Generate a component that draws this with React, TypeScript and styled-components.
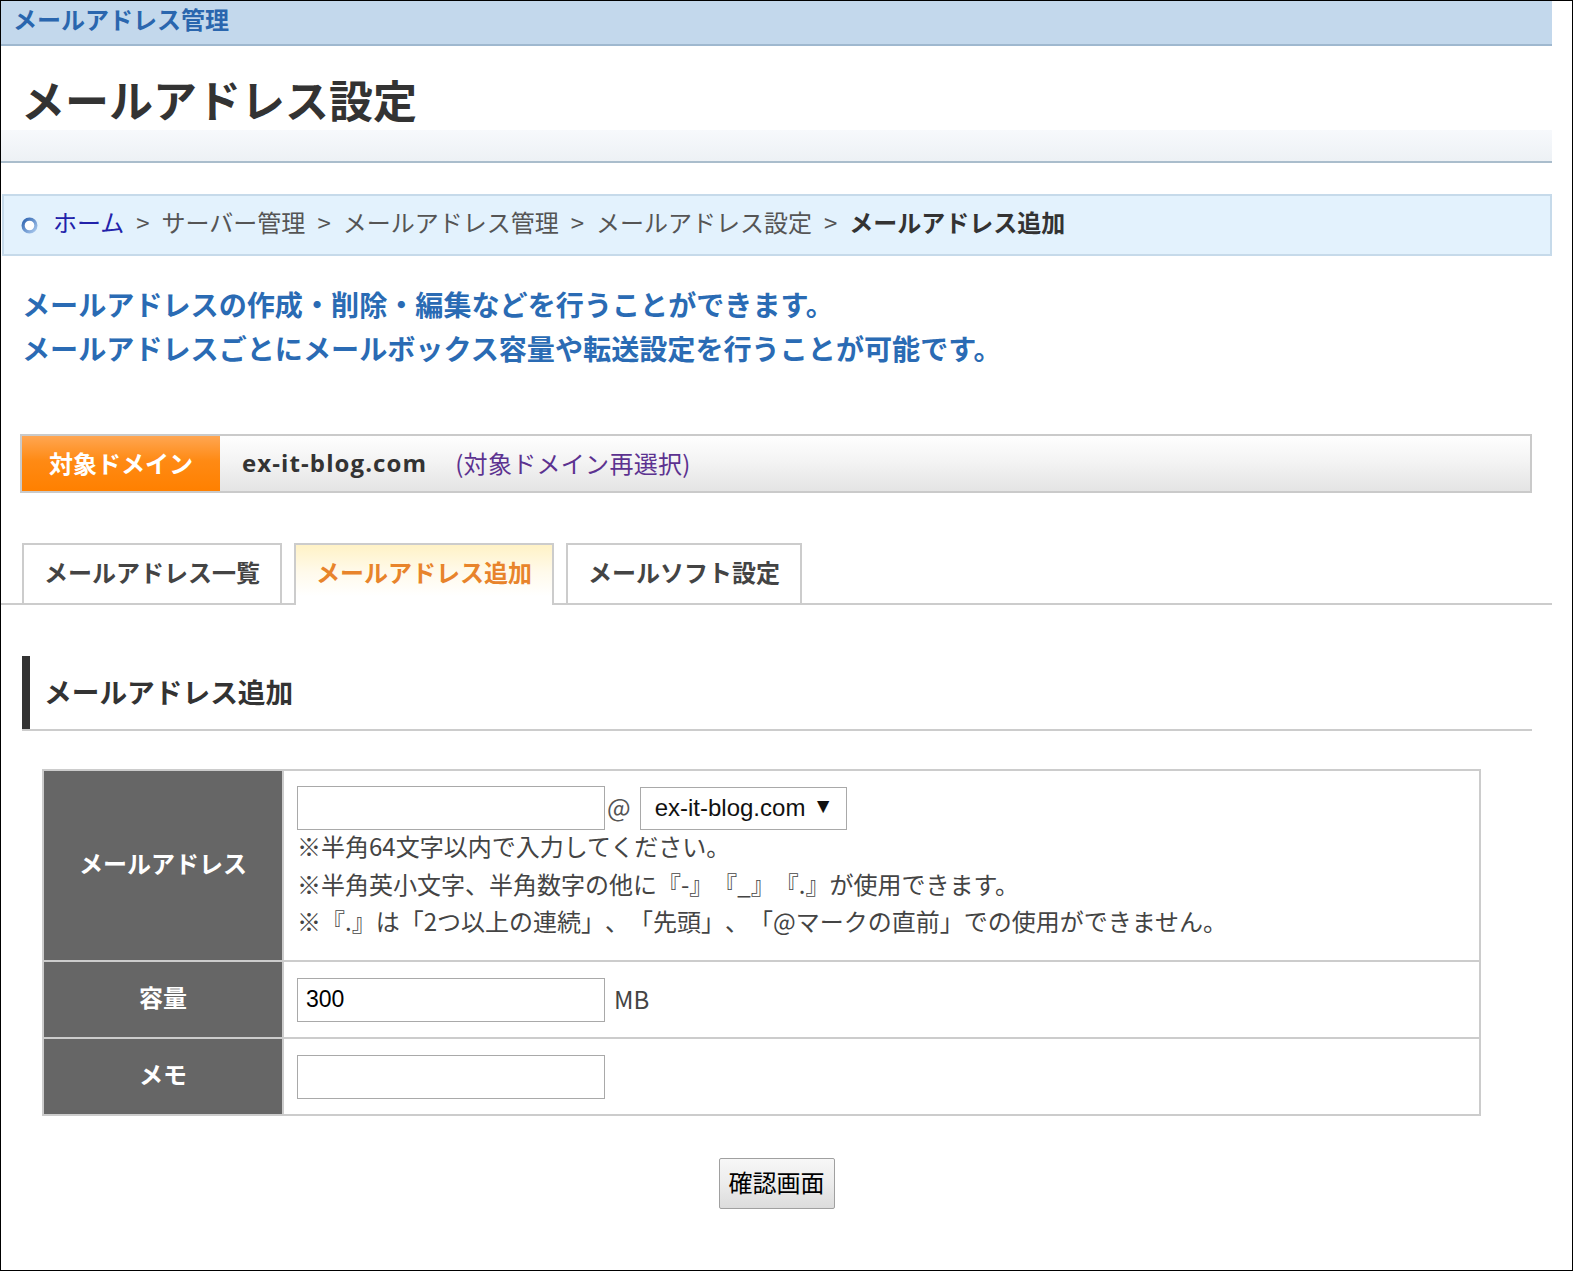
import React from "react";
import styled, { createGlobalStyle } from "styled-components";

const GlobalStyle = createGlobalStyle`
  html, body { margin: 0; padding: 0; background: #fff; }
  body {
    font-family: "Noto Sans CJK JP", "Noto Sans", sans-serif;
    color: #333;
    text-spacing-trim: space-all;
  }
  * { box-sizing: border-box; }
`;

const JP = `"Noto Sans CJK JP", "Noto Sans", sans-serif`;
const LATIN = `"Liberation Sans", Arial, sans-serif`;

const Frame = styled.div`
  width: 1573px;
  height: 1271px;
  border: 1px solid #000;
  background: #fff;
  overflow: hidden;
`;

const Page = styled.div`
  width: 1551px;
`;

const TopBar = styled.div`
  height: 45px;
  background: #c3d8ec;
  border-bottom: 2px solid #9fb8cf;
  padding-left: 12px;
  font-size: 24px;
  font-weight: 700;
  line-height: 36px;
  color: #2a66ae;
`;

const TitleBox = styled.div`
  height: 117px;
  padding: 23px 0 0 20px;
  border-bottom: 2px solid #aabdcc;
  background: linear-gradient(180deg, #fff 0, #fff 84px, #f7f9fc 84px, #edf1f5 100%);
`;

const Title = styled.h1`
  margin: 0;
  font-size: 44px;
  line-height: 60px;
  font-weight: 700;
  color: #333;
`;

const Breadcrumb = styled.nav`
  margin: 31px 0 0 1px;
  height: 62px;
  border: 2px solid #c6daea;
  background: #e3f2fd;
  display: flex;
  align-items: center;
  padding: 0 0 6px 17px;
  font-size: 24px;
  line-height: 52px;
  color: #555;
`;

const Crumb = styled.span<{ $link?: boolean; $current?: boolean }>`
  color: ${(p) => (p.$link ? "#2222aa" : p.$current ? "#333" : "#555")};
  font-weight: ${(p) => (p.$current ? 700 : 400)};
`;

const CrumbSep = styled.span`
  margin: 0 12px;
  color: #555;
`;

const HomeMark = styled.svg`
  flex: none;
  margin-right: 15px;
  margin-top: 6px;
`;

const Lead = styled.div`
  margin: 26px 0 0 21px;
  font-size: 28.1px;
  line-height: 44px;
  font-weight: 700;
  color: #2a6bb4;
`;

const DomainBar = styled.div`
  margin: 64px 20px 0 19px;
  height: 59px;
  border: 2px solid #cacaca;
  display: flex;
  align-items: stretch;
  background: linear-gradient(180deg, #fefefe 0%, #f4f4f4 45%, #e4e4e4 100%);
`;

const DomainLabel = styled.div`
  width: 198px;
  display: flex;
  align-items: center;
  justify-content: center;
  padding-bottom: 3px;
  background: linear-gradient(180deg, #ffa652 0%, #ff8a14 45%, #ff8000 100%);
  color: #fff;
  font-size: 24px;
  font-weight: 700;
`;

const DomainName = styled.div`
  display: flex;
  align-items: center;
  padding-bottom: 3px;
  margin-left: 22px;
  font-family: "Open Sans", ${JP};
  font-size: 24px;
  font-weight: 700;
  letter-spacing: 1.1px;
  color: #333;
`;

const Reselect = styled.a`
  display: flex;
  align-items: center;
  padding-bottom: 3px;
  margin-left: 28px;
  font-size: 24px;
  letter-spacing: 0.3px;
  color: #5c3290;
  text-decoration: none;
`;

const TabRow = styled.div`
  margin-top: 50px;
  height: 62px;
  display: flex;
  align-items: flex-end;
  gap: 12px;
  padding-left: 21px;
  border-bottom: 2px solid #cccccc;
`;

const Tab = styled.div<{ $active?: boolean }>`
  height: ${(p) => (p.$active ? "62px" : "60px")};
  margin-bottom: ${(p) => (p.$active ? "-2px" : "0")};
  border: 2px solid #cccccc;
  border-bottom: none;
  padding: 0 20px ${(p) => (p.$active ? "8px" : "6px")};
  display: flex;
  align-items: center;
  font-size: 24px;
  font-weight: 700;
  color: ${(p) => (p.$active ? "#e8842b" : "#444")};
  background: ${(p) =>
    p.$active ? "linear-gradient(180deg, #fff2c6 0%, #fffaeb 45%, #fff 85%)" : "#fff"};
`;

const SectionHead = styled.div`
  margin: 51px 20px 0 21px;
  border-bottom: 2px solid #cccccc;
`;

const SectionTitle = styled.h2`
  margin: 0;
  height: 73px;
  border-left: 8px solid #333;
  padding: 0 0 4px 14px;
  display: flex;
  align-items: center;
  font-size: 27.7px;
  font-weight: 700;
  color: #333;
`;

const FormGrid = styled.div`
  margin: 38px 0 0 41px;
  width: 1439px;
  display: grid;
  grid-template-columns: 238px 1fr;
  gap: 2px;
  padding: 2px;
  background: #cccccc;
`;

const HeadCell = styled.div`
  background: #666;
  color: #fff;
  font-size: 24px;
  font-weight: 700;
  padding-bottom: 6px;
  display: flex;
  align-items: center;
  justify-content: center;
`;

const BodyCell = styled.div<{ $tall?: boolean }>`
  background: #fff;
  padding: ${(p) => (p.$tall ? "15px 12px 17px 13px" : "16px 12px 15px 13px")};
  display: flex;
  flex-direction: column;
  align-items: flex-start;
`;

const FieldLine = styled.div`
  display: flex;
  align-items: center;
`;

const TextInput = styled.input`
  width: 308px;
  height: 44px;
  border: 1px solid #a9a9a9;
  padding: 0 8px;
  font-family: ${LATIN};
  font-size: 23px;
  color: #000;
  background: #fff;
  outline: none;
`;

const AtMark = styled.span`
  margin: 0 9px 0 2px;
  padding-bottom: 4px;
  font-size: 25px;
  color: #555;
`;

const SelectBox = styled.div`
  width: 207px;
  height: 43px;
  border: 1px solid #a9a9a9;
  background: #fff;
  display: flex;
  align-items: center;
  justify-content: space-between;
  padding: 0 12px 0 14px;
  font-family: ${LATIN};
  font-size: 24px;
  color: #111;
`;

const Caret = styled.span`
  font-family: ${LATIN};
  font-size: 21px;
  margin-top: -5px;
  color: #111;
`;

const Notes = styled.div`
  margin-top: -3px;
  margin-bottom: 3px;
  font-size: 24px;
  line-height: 37.5px;
  color: #444;
`;

const Unit = styled.span`
  margin-left: 9px;
  padding-bottom: 3px;
  font-size: 24px;
  color: #444;
`;

const ButtonRow = styled.div`
  margin-top: 42px;
  display: flex;
  justify-content: center;
`;

const ConfirmButton = styled.button`
  width: 116px;
  height: 51px;
  padding: 0 0 4px;
  border: 1px solid #a0a0a0;
  border-radius: 2px;
  background: linear-gradient(180deg, #f7f7f7 0%, #ececec 50%, #dcdcdc 100%);
  font-family: ${JP};
  font-size: 24px;
  color: #000;
`;

const HomeIcon = () => (
  <HomeMark width="17" height="17" viewBox="0 0 17 17">
    <defs>
      <linearGradient id="homeRing" x1="0" y1="0" x2="1" y2="1">
        <stop offset="0" stopColor="#2f64b0" />
        <stop offset="1" stopColor="#a9c9ee" />
      </linearGradient>
    </defs>
    <circle cx="8.5" cy="8.5" r="6.4" fill="#fff" stroke="url(#homeRing)" strokeWidth="3.2" />
  </HomeMark>
);

const crumbs = ["サーバー管理", "メールアドレス管理", "メールアドレス設定"];

export default function App() {
  return (
    <>
      <GlobalStyle />
      <Frame>
        <Page>
          <TopBar>メールアドレス管理</TopBar>
          <TitleBox>
            <Title>メールアドレス設定</Title>
          </TitleBox>

          <Breadcrumb>
            <HomeIcon />
            <Crumb $link>ホーム</Crumb>
            {crumbs.map((c) => (
              <React.Fragment key={c}>
                <CrumbSep>&gt;</CrumbSep>
                <Crumb>{c}</Crumb>
              </React.Fragment>
            ))}
            <CrumbSep>&gt;</CrumbSep>
            <Crumb $current>メールアドレス追加</Crumb>
          </Breadcrumb>

          <Lead>
            メールアドレスの作成・削除・編集などを行うことができます。
            <br />
            メールアドレスごとにメールボックス容量や転送設定を行うことが可能です。
          </Lead>

          <DomainBar>
            <DomainLabel>対象ドメイン</DomainLabel>
            <DomainName>ex-it-blog.com</DomainName>
            <Reselect href="#">(対象ドメイン再選択)</Reselect>
          </DomainBar>

          <TabRow>
            <Tab>メールアドレス一覧</Tab>
            <Tab $active>メールアドレス追加</Tab>
            <Tab>メールソフト設定</Tab>
          </TabRow>

          <SectionHead>
            <SectionTitle>メールアドレス追加</SectionTitle>
          </SectionHead>

          <FormGrid>
            <HeadCell>メールアドレス</HeadCell>
            <BodyCell $tall>
              <FieldLine>
                <TextInput type="text" />
                <AtMark>@</AtMark>
                <SelectBox>
                  <span>ex-it-blog.com</span>
                  <Caret>▼</Caret>
                </SelectBox>
              </FieldLine>
              <Notes>
                ※半角64文字以内で入力してください。
                <br />
                ※半角英小文字、半角数字の他に『-』『_』『.』が使用できます。
                <br />
                ※『.』は「2つ以上の連続」、「先頭」、「@マークの直前」での使用ができません。
              </Notes>
            </BodyCell>

            <HeadCell>容量</HeadCell>
            <BodyCell>
              <FieldLine>
                <TextInput type="text" defaultValue="300" />
                <Unit>MB</Unit>
              </FieldLine>
            </BodyCell>

            <HeadCell>メモ</HeadCell>
            <BodyCell>
              <FieldLine>
                <TextInput type="text" />
              </FieldLine>
            </BodyCell>
          </FormGrid>

          <ButtonRow>
            <ConfirmButton type="button">確認画面</ConfirmButton>
          </ButtonRow>
        </Page>
      </Frame>
    </>
  );
}
